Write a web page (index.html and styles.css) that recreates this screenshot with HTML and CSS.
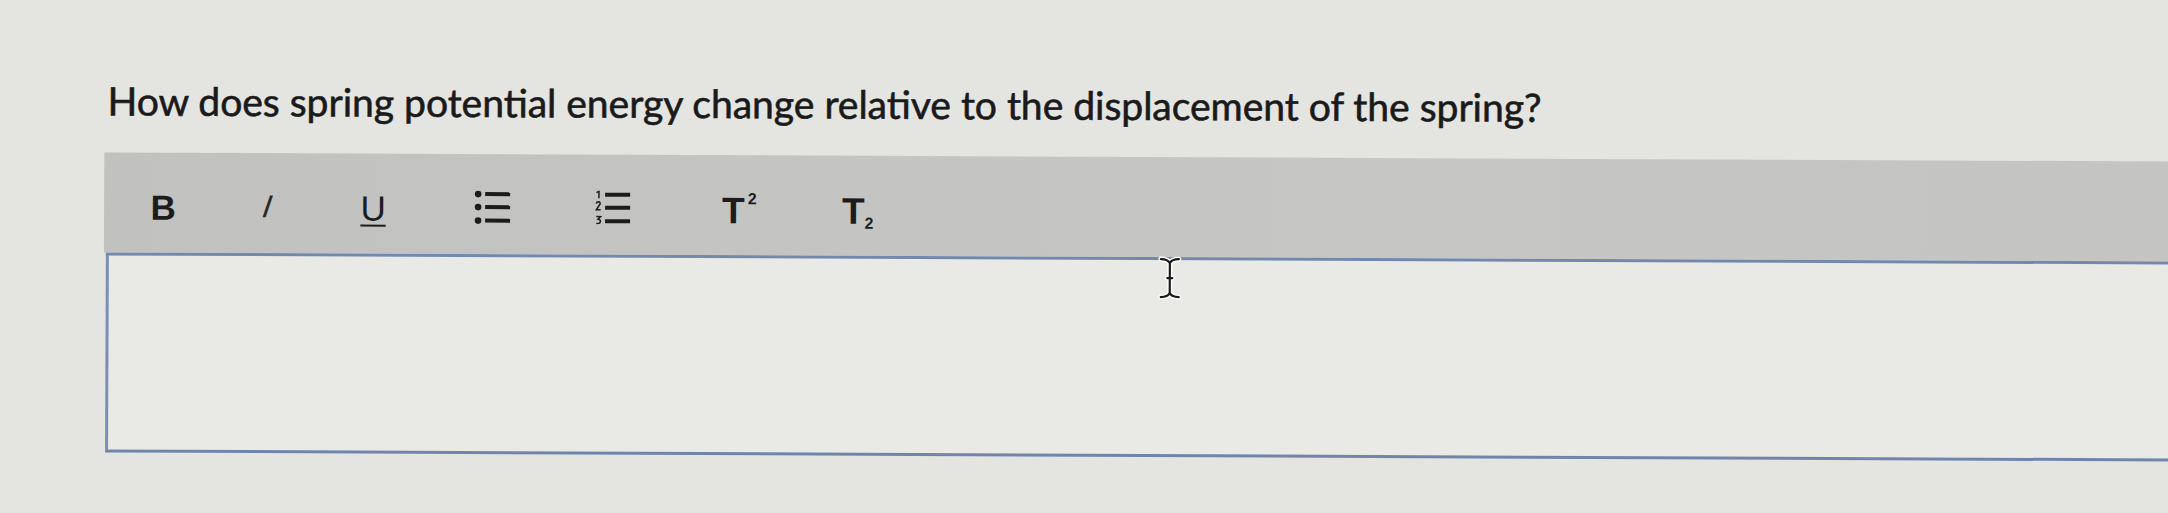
FILE: index.html
```html
<!DOCTYPE html>
<html lang="en">
<head>
<meta charset="utf-8">
<title>Question</title>
<link rel="stylesheet" href="styles.css">
</head>
<body>
<div class="page">
  <h1 class="question">How does spring potential energy change relative to the displacement of the spring?</h1>
  <div class="editor">
    <div class="toolbar">
      <div class="tool-group group-format">
        <span class="tool tool-bold">B</span>
        <span class="tool tool-italic">I</span>
        <span class="tool tool-underline">U</span>
      </div>
      <div class="tool-group group-lists">
        <span class="tool tool-icon">
          <svg width="38" height="34" viewBox="0 0 38 34" aria-hidden="true">
            <circle cx="4" cy="4" r="3.3" fill="#1c1c1c"/>
            <circle cx="4" cy="17" r="3.3" fill="#1c1c1c"/>
            <circle cx="4" cy="30.5" r="3.3" fill="#1c1c1c"/>
            <rect x="11" y="2" width="25" height="4" fill="#1c1c1c"/>
            <rect x="11" y="15" width="25" height="4" fill="#1c1c1c"/>
            <rect x="11" y="28.5" width="25" height="4" fill="#1c1c1c"/>
          </svg>
        </span>
        <span class="tool tool-icon">
          <svg width="38" height="34" viewBox="0 0 38 34" aria-hidden="true">
            <path d="M2.4 2 L4.8 0.6 L4.8 7.6" fill="none" stroke="#1c1c1c" stroke-width="1.5"/>
            <path d="M2.2 13 Q2.4 11.2 4.2 11.2 Q6.4 11.4 6 13.4 L2.2 19.2 L6.6 19.2" fill="none" stroke="#1c1c1c" stroke-width="1.5"/>
            <path d="M2.2 26 L6.4 26 L4 28.6 Q6.6 29 6.4 31.2 Q6 33.4 2.2 32.8" fill="none" stroke="#1c1c1c" stroke-width="1.5"/>
            <rect x="11" y="2" width="25" height="4" fill="#1c1c1c"/>
            <rect x="11" y="15" width="25" height="4" fill="#1c1c1c"/>
            <rect x="11" y="28.5" width="25" height="4" fill="#1c1c1c"/>
          </svg>
        </span>
        <span class="tool tool-script"><span class="glyph">T<sup class="sup">2</sup></span></span>
        <span class="tool tool-script"><span class="glyph">T<sub class="sub">2</sub></span></span>
      </div>
    </div>
    <div class="content-area"></div>
  </div>
  <svg class="ibeam" width="26" height="46" viewBox="0 0 26 46" aria-hidden="true">
    <g fill="none" stroke-linecap="round" stroke-linejoin="round">
      <path d="M4 4 Q11 4 13 8 Q15 4 22 4 M13 8 L13 38 M4 42 Q11 42 13 38 Q15 42 22 42 M10.5 23 L15.5 23" stroke="#ffffff" stroke-width="5"/>
      <path d="M4 4 Q11 4 13 8 Q15 4 22 4 M13 8 L13 38 M4 42 Q11 42 13 38 Q15 42 22 42 M10.5 23 L15.5 23" stroke="#1a1a1a" stroke-width="2.2"/>
    </g>
  </svg>
</div>
</body>
</html>
```

FILE: styles.css
```css
html, body {
  margin: 0;
  padding: 0;
}

body {
  width: 2168px;
  height: 513px;
  overflow: hidden;
  background: #e4e4e1;
  font-family: Lato, "Noto Sans", sans-serif;
  color: #1d1d1d;
}

.page {
  position: relative;
  padding: 77px 0 0 105px;
  transform: rotate(0.25deg);
  transform-origin: 0 0;
}

.question {
  margin: 0;
  padding-left: 3px;
  font-family: Lato, sans-serif;
  font-weight: 400;
  font-size: 39px;
  line-height: 46px;
  color: #1a1a1a;
  -webkit-text-stroke: 0.6px #1a1a1a;
  white-space: nowrap;
}

.editor {
  margin-top: 29px;
  width: 2120px;
}

.toolbar {
  height: 100px;
  background: linear-gradient(90deg, #c1c1bf 0%, #c6c6c4 60%, #c4c4c2 100%);
  display: flex;
  align-items: center;
  gap: 70px;
  padding-left: 34px;
  box-sizing: border-box;
}

.tool-group {
  display: flex;
  align-items: center;
}

.group-format {
  gap: 55px;
}

.group-lists {
  gap: 70px;
}

.tool {
  width: 50px;
  height: 44px;
  display: flex;
  align-items: center;
  justify-content: center;
  font-family: "Liberation Sans", Arial, sans-serif;
  font-size: 35px;
  line-height: 1;
  color: #1c1c1c;
  padding-top: 8px;
  box-sizing: border-box;
}

.tool-bold {
  font-weight: 700;
}

.tool-italic {
  font-style: italic;
  font-weight: 400;
  font-family: "DejaVu Sans", sans-serif;
  font-size: 30px;
  transform: skewX(-8deg);
  color: #2a2a2a;
}

.tool-underline {
  font-weight: 400;
  text-decoration: underline;
  text-decoration-thickness: 2px;
  text-underline-offset: 4px;
}

.tool-icon {
  padding-top: 6px;
}

.tool-script {
  font-weight: 700;
  font-family: "Liberation Sans", Arial, sans-serif;
  font-size: 37px;
  padding-top: 10px;
  padding-left: 14px;
  justify-content: flex-start;
}

.glyph {
  display: inline-block;
  line-height: 1;
  white-space: nowrap;
}

.sup, .sub {
  font-size: 16px;
  font-weight: 700;
  line-height: 0;
  position: relative;
  vertical-align: baseline;
}

.sup {
  top: -19px;
  margin-left: 3px;
}

.sub {
  top: 5px;
  margin-left: 0;
}

.content-area {
  height: 200px;
  background: #e9e9e6;
  border-top: 3px solid #7289ac;
  border-left: 3px solid #7a90b2;
  border-bottom: 3px solid #6f86aa;
  margin-left: 2px;
  box-sizing: border-box;
}

.ibeam {
  position: absolute;
  left: 1158px;
  top: 250px;
}
```
